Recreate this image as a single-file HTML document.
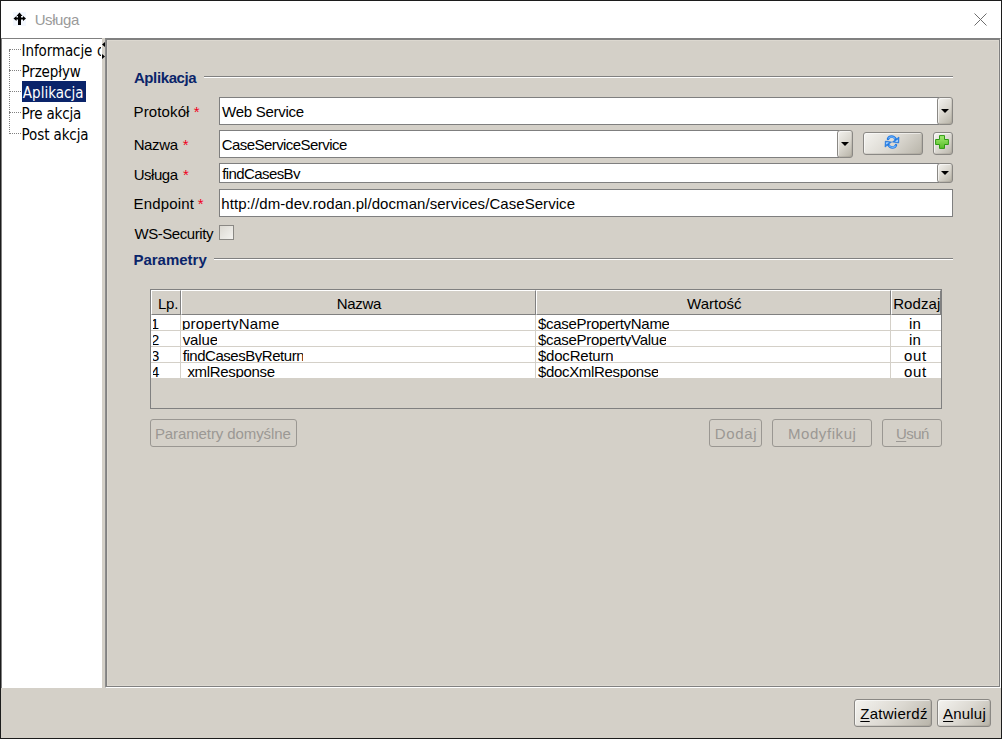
<!DOCTYPE html>
<html lang="pl">
<head>
<meta charset="utf-8">
<title>Usługa</title>
<style>
html,body{margin:0;padding:0;}
body{width:1002px;height:739px;overflow:hidden;background:#fff;position:relative;
 font-family:"Liberation Sans",sans-serif;font-size:15px;color:#000;}
.abs{position:absolute;}
.t{position:relative;}
#win{position:absolute;left:0;top:0;width:1000px;height:737px;border:1px solid #1c1c1c;background:#d4d0c8;}
#titlebar{position:absolute;left:1px;top:1px;width:1000px;height:37px;background:#fff;}
#title{position:absolute;left:34px;top:9px;line-height:20px;font-size:15px;color:#9a9a9a;white-space:pre;}
#tree{position:absolute;left:1px;top:38px;width:100px;height:649px;background:#fff;border-left:1px solid #808080;border-top:1px solid #808080;overflow:hidden;
 font-family:"DejaVu Sans Condensed","Liberation Sans",sans-serif;font-size:15px;}
.ti{position:absolute;left:20px;height:21px;box-sizing:border-box;line-height:21px;padding:2px 0 0 0;white-space:pre;overflow:hidden;}
.ti.sel{background:#0a246a;color:#fff;}
.hd{position:absolute;height:0;border-top:1px dotted #808080;}
#panel{position:absolute;left:105px;top:38px;width:894px;height:648px;border:1px solid;border-color:#808080 #fff #fff #8c8c8c;background:#d4d0c8;}
#panel div{position:absolute;left:0;top:0;right:0;bottom:0;border:1px solid #808080;box-shadow:inset 0 0 0 1px #dcd8d0;}
.lbl{position:absolute;left:134.5px;height:20px;line-height:20px;white-space:pre;}
.lbl i{font-style:normal;color:#f00020;}
.sec{position:absolute;left:134.5px;height:20px;line-height:20px;font-weight:bold;color:#0a246a;white-space:pre;}
.sep{position:absolute;height:1px;background:#808080;border-bottom:1px solid #fff;}
.fld{position:absolute;background:#fff;border:1px solid #7f7f7f;box-sizing:border-box;white-space:pre;overflow:hidden;}
.fld span{position:absolute;left:2.5px;}
.cbtn{position:absolute;width:16px;box-sizing:border-box;border:1px solid #8a8884;border-radius:3px;background:linear-gradient(135deg,#f3f2ee 0%,#dad7cf 50%,#b6b2a6 100%);}
.cbtn:after{content:"";position:absolute;left:3px;top:50%;margin-top:-2px;border-left:4.5px solid transparent;border-right:4.5px solid transparent;border-top:4.5px solid #000;}
.btn{position:absolute;box-sizing:border-box;border:1px solid #8a8884;border-radius:3px;background:linear-gradient(135deg,#f4f3ef 0%,#dcd9d2 50%,#b8b4a9 100%);text-align:center;white-space:pre;}
.btn,.cbtn{box-shadow:inset 1px 1px 0 rgba(255,255,255,.55),inset -1px -1px 0 rgba(90,85,70,.12);}
.btn.dis{box-shadow:none;background:#d4d0c8;color:#9b9894;border-color:#9a9792;}
u{text-decoration:underline;text-underline-offset:2px;text-decoration-thickness:1px;}
#tbl{position:absolute;left:150px;top:289px;width:792px;height:120px;box-sizing:border-box;border:1px solid #808080;background:#d4d0c8;overflow:hidden;}
.th{position:absolute;top:0;height:25px;box-sizing:border-box;border-top:1px solid #fff;border-left:1px solid #fff;border-right:1px solid #808080;border-bottom:1px solid #808080;text-align:center;line-height:26px;white-space:pre;overflow:hidden;}
.tr{position:absolute;left:0;width:790px;height:15px;background:#fff;border-bottom:1px solid #d4d0c8;overflow:hidden;}
.td{position:absolute;top:0;height:15px;line-height:17px;white-space:pre;overflow:hidden;}
.vl{position:absolute;top:25px;width:1px;height:64px;background:#d4d0c8;}
</style>
</head>
<body>
<div id="win"></div>
<div id="titlebar">
 <svg class="abs" style="left:12px;top:11px" width="14" height="14" viewBox="0 0 14 14">
  <rect x="0" y="0" width="13" height="14" fill="#f4f8ff"/>
  <path d="M6.5 0.5 L9.5 4 L8 4 L8 5.5 L10 5.5 L10 4 L13 6.5 L10 9 L10 7.5 L8 7.5 L8 13 L5 13 L5 7.5 L3.5 7.5 L3.5 9 L0.5 6.5 L3.5 4 L3.5 5.5 L5 5.5 L5 4 L3.5 4 Z" fill="#000"/>
 </svg>
 <div id="title"><span id="t_title" class="t" style="left:-0.39px;letter-spacing:-0.414px">Usługa</span></div>
 <svg class="abs" style="left:972px;top:11px" width="16" height="16" viewBox="0 0 16 16">
  <path d="M1.5 1.5 L13.5 13.5 M13.5 1.5 L1.5 13.5" stroke="#6e6e6e" stroke-width="1" fill="none"/>
 </svg>
</div>

<!-- tree -->
<div id="tree">
 <div class="abs" style="left:7px;top:11px;width:0;height:84px;border-left:1px dotted #808080"></div>
 <div class="hd" style="left:7px;top:10px;width:12px"></div>
 <div class="hd" style="left:7px;top:31px;width:12px"></div>
 <div class="hd" style="left:7px;top:52px;width:12px"></div>
 <div class="hd" style="left:7px;top:73px;width:12px"></div>
 <div class="hd" style="left:7px;top:94px;width:12px"></div>
 <div class="ti" style="top:0px;width:79px"><span id="t_tr1" class="t" style="left:-0.40px;letter-spacing:-0.105px">Informacje</span> ogólne</div>
 <div class="ti" style="top:21px"><span id="t_tr2" class="t" style="left:-0.57px;letter-spacing:-0.110px">Przepływ</span></div>
 <div class="ti sel" style="top:42px;width:64px"><span id="t_tr3" class="t" style="left:0.82px;letter-spacing:0.016px">Aplikacja</span></div>
 <div class="ti" style="top:63px"><span id="t_tr4" class="t" style="left:-0.40px;letter-spacing:-0.194px">Pre akcja</span></div>
 <div class="ti" style="top:84px"><span id="t_tr5" class="t" style="left:-0.40px;letter-spacing:-0.116px">Post akcja</span></div>
</div>
<!-- splitter arrows -->
<svg class="abs" style="left:102px;top:40px" width="4" height="22" viewBox="0 0 4 22">
 <path d="M3 2 L3 7 L0 4.5 Z M0 14 L0 19 L3 16.5 Z" fill="#000"/>
</svg>

<div id="panel"><div></div></div>

<!-- Aplikacja section -->
<div class="sec" style="top:68px"><span id="t_sec1" class="t" style="left:-0.64px;letter-spacing:-0.383px">Aplikacja</span></div>
<div class="sep" style="left:204px;top:76px;width:749px"></div>

<div class="lbl" style="top:102px"><span id="t_l1" class="t" style="left:-0.96px;letter-spacing:0.126px">Protokół</span> <i id="t_l1s" class="t" style="left:-0.98px">*</i></div>
<div class="fld" style="left:219px;top:97px;width:720px;border-right:0;height:28px;line-height:28px"><span id="t_f1" style="left:2.11px;letter-spacing:-0.267px">Web Service</span></div>
<div class="cbtn" style="left:937px;top:97px;height:28px"></div>

<div class="lbl" style="top:135px"><span id="t_l2" class="t" style="left:-0.89px;letter-spacing:-0.358px">Nazwa</span> <i id="t_l2s" class="t" style="left:0.05px">*</i></div>
<div class="fld" style="left:219px;top:130px;width:620px;border-right:0;height:28px;line-height:28px"><span id="t_f2" style="left:1.71px;letter-spacing:-0.558px">CaseServiceService</span></div>
<div class="cbtn" style="left:837px;top:130px;height:28px"></div>
<div class="btn" style="left:863px;top:132px;width:60px;height:23px"></div>
<svg class="abs" style="left:884px;top:134px" width="16" height="16" viewBox="0 0 16 16">
 <g>
  <path d="M4.0 5.0 C5.2 2.0 9.7 1.4 11.9 5.6" fill="none" stroke="#2079e4" stroke-width="2.5" stroke-linecap="round"/>
  <path d="M4.3 4.5 C5.6 2.3 9.1 1.9 11.2 4.6" fill="none" stroke="#74b6fb" stroke-width="1.1"/>
  <path d="M15.0 3.0 L14.7 9.0 L8.4 8.0 Z" fill="#2a84ea" stroke="#1b6fd8" stroke-width="0.6" stroke-linejoin="round"/>
  <path d="M13.9 5.6 L13.7 7.9 L11.0 7.5 Z" fill="#c4e2ff"/>
 </g>
 <g transform="rotate(180 8 8.05)">
  <path d="M4.0 5.0 C5.2 2.0 9.7 1.4 11.9 5.6" fill="none" stroke="#2079e4" stroke-width="2.5" stroke-linecap="round"/>
  <path d="M4.3 4.5 C5.6 2.3 9.1 1.9 11.2 4.6" fill="none" stroke="#74b6fb" stroke-width="1.1"/>
  <path d="M15.0 3.0 L14.7 9.0 L8.4 8.0 Z" fill="#2a84ea" stroke="#1b6fd8" stroke-width="0.6" stroke-linejoin="round"/>
  <path d="M13.9 5.6 L13.7 7.9 L11.0 7.5 Z" fill="#c4e2ff"/>
 </g>
</svg>
<div class="btn" style="left:933px;top:132px;width:20px;height:23px"></div>
<svg class="abs" style="left:935px;top:135px" width="14" height="14" viewBox="0 0 14 14">
 <defs><linearGradient id="gp" x1="0" y1="0" x2="0" y2="1"><stop offset="0" stop-color="#a4ec74"/><stop offset="1" stop-color="#56bb26"/></linearGradient></defs>
 <path d="M4.5 0.6 h5 v3.9 h3.9 v5 h-3.9 v3.9 h-5 v-3.9 h-3.9 v-5 h3.9 Z" fill="url(#gp)" stroke="#2f9a14" stroke-width="1" stroke-linejoin="round"/>
</svg>

<div class="lbl" style="top:165px"><span id="t_l3" class="t" style="left:-0.89px;letter-spacing:-0.449px">Usługa</span> <i id="t_l3s" class="t" style="left:0.45px">*</i></div>
<div class="fld" style="left:219px;top:163px;width:720px;border-right:0;height:20px;line-height:19px"><div class="abs" style="left:0;top:0;width:700px;height:15px;overflow:hidden"><span id="t_f3" style="left:2.17px;letter-spacing:-0.587px">findCasesBy</span></div></div>
<div class="cbtn" style="left:937px;top:163px;height:20px"></div>

<div class="lbl" style="top:194px"><span id="t_l4" class="t" style="left:-0.96px;letter-spacing:0.153px">Endpoint</span> <i id="t_l4s" class="t" style="left:-1.39px">*</i></div>
<div class="fld" style="left:219px;top:189px;width:734px;height:28px;line-height:28px"><span id="t_f4" style="left:1.36px;letter-spacing:0.060px">http://dm-dev.rodan.pl/docman/services/CaseService</span></div>

<div class="lbl" style="top:224px"><span id="t_l5" class="t" style="left:-0.04px;letter-spacing:-0.443px">WS-Security</span></div>
<div class="abs" style="left:219px;top:225px;width:15px;height:15px;box-sizing:border-box;border:1px solid #8a8884;background:linear-gradient(135deg,#dcd9d2,#f4f3f0)"></div>

<div class="sec" style="top:250px"><span id="t_sec2" class="t" style="left:-1.04px;letter-spacing:-0.010px">Parametry</span></div>
<div class="sep" style="left:214px;top:258px;width:739px"></div>

<!-- table -->
<div id="tbl">
 <div class="th" style="left:0;width:30px"><span id="t_h1" class="t" style="left:2.13px;letter-spacing:-0.129px">Lp.</span></div>
 <div class="th" style="left:30px;width:355px"><span id="t_h2" class="t" style="left:0.38px;letter-spacing:-0.300px">Nazwa</span></div>
 <div class="th" style="left:385px;width:355px"><span id="t_h3" class="t" style="left:0.76px;letter-spacing:-0.002px">Wartość</span></div>
 <div class="th" style="left:740px;width:50px"><span id="t_h4" class="t" style="left:0.84px;letter-spacing:0.097px">Rodzaj</span></div>
 <div class="tr" style="top:25px"><div class="td" style="left:2px"><span id="t_r1a" class="t" style="left:-2.19px">1</span></div><div class="td" style="left:30.5px"><span id="t_r1b" class="t" style="left:0.45px;letter-spacing:0.210px">propertyName</span></div><div class="td" style="left:386px"><span id="t_r1c" class="t" style="left:0.91px;letter-spacing:-0.294px">$casePropertyName</span></div><div class="td" style="left:741px;width:49px;text-align:center"><span id="t_r1d" class="t" style="left:-1.39px;letter-spacing:0.402px">in</span></div></div>
 <div class="tr" style="top:41px"><div class="td" style="left:2px"><span id="t_r2a" class="t" style="left:-1.91px">2</span></div><div class="td" style="left:30.5px"><span id="t_r2b" class="t" style="left:1.20px;letter-spacing:-0.089px">value</span></div><div class="td" style="left:386px"><span id="t_r2c" class="t" style="left:0.91px;letter-spacing:-0.273px">$casePropertyValue</span></div><div class="td" style="left:741px;width:49px;text-align:center"><span id="t_r2d" class="t" style="left:-1.39px;letter-spacing:0.402px">in</span></div></div>
 <div class="tr" style="top:57px"><div class="td" style="left:2px"><span id="t_r3a" class="t" style="left:-2.14px">3</span></div><div class="td" style="left:31px"><span id="t_r3b" class="t" style="left:0.68px;letter-spacing:-0.457px">findCasesByReturn</span></div><div class="td" style="left:386px"><span id="t_r3c" class="t" style="left:0.91px;letter-spacing:-0.201px">$docReturn</span></div><div class="td" style="left:741px;width:49px;text-align:center"><span id="t_r3d" class="t" style="left:-1.07px;letter-spacing:0.605px">out</span></div></div>
 <div class="tr" style="top:73px"><div class="td" style="left:2px"><span id="t_r4a" class="t" style="left:-1.90px">4</span></div><div class="td" style="left:31px"><span id="t_r4b" class="t" style="left:-0.10px;letter-spacing:-0.324px"><span style="margin-right:-2.5px">_</span>xmlResponse</span></div><div class="td" style="left:386px"><span id="t_r4c" class="t" style="left:0.91px;letter-spacing:-0.324px">$docXmlResponse</span></div><div class="td" style="left:741px;width:49px;text-align:center"><span id="t_r4d" class="t" style="left:-1.07px;letter-spacing:0.605px">out</span></div></div>
 <div class="vl" style="left:29px"></div>
 <div class="vl" style="left:384px"></div>
 <div class="vl" style="left:739px"></div>
</div>

<div class="btn dis" style="left:150px;top:419px;width:147px;height:28px;line-height:28px"><span id="t_b1" class="t" style="left:-0.68px;letter-spacing:-0.097px">Parametry domyślne</span></div>
<div class="btn dis" style="left:709px;top:419px;width:53px;height:28px;line-height:28px"><span id="t_b2" class="t" style="left:0.47px;letter-spacing:0.622px">Dodaj</span></div>
<div class="btn dis" style="left:772px;top:419px;width:100px;height:28px;line-height:28px"><span id="t_b3" class="t" style="left:0.20px;letter-spacing:0.580px">Modyfikuj</span></div>
<div class="btn dis" style="left:882px;top:419px;width:60px;height:28px;line-height:28px"><span id="t_b4" class="t" style="left:0.35px;letter-spacing:-0.588px"><u>U</u>suń</span></div>

<!-- bottom buttons -->
<div class="btn" style="left:854px;top:699px;width:78px;height:28px;line-height:28px"><span id="t_b5" class="t" style="left:1.03px;letter-spacing:0.265px"><u>Z</u>atwierdź</span></div>
<div class="btn" style="left:937px;top:699px;width:54px;height:28px;line-height:28px"><span id="t_b6" class="t" style="left:0.50px;letter-spacing:0.195px"><u>A</u>nuluj</span></div>
</body>
</html>
